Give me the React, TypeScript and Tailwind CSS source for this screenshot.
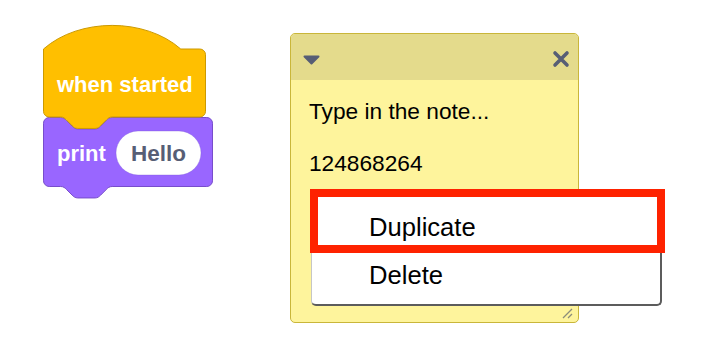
import React from "react";

const S = 1.43;
const R = 4 * S;

function notch(dir: 1 | -1) {
  const k = (n: number) => (n * S * dir).toFixed(2);
  const v = (n: number) => (n * S).toFixed(2);
  return `c ${k(2)},0 ${k(3)},${v(1)} ${k(4)},${v(2)} l ${k(4)},${v(4)} c ${k(1)},${v(1)} ${k(2)},${v(2)} ${k(4)},${v(2)} h ${k(12)} c ${k(2)},0 ${k(3)},${v(-1)} ${k(4)},${v(-2)} l ${k(4)},${v(-4)} c ${k(1)},${v(-1)} ${k(2)},${v(-2)} ${k(4)},${v(-2)}`;
}

function hatPath(x: number, top: number, right: number, bottom: number) {
  return [
    `M ${x},${top}`,
    `c ${25 * S},${-22 * S} ${71 * S},${-22 * S} ${96 * S},0`,
    `H ${right - R} a ${R},${R} 0 0 1 ${R},${R}`,
    `V ${bottom - R} a ${R},${R} 0 0 1 ${-R},${R}`,
    `H ${x + 48 * S} ${notch(-1)}`,
    `H ${x + R} a ${R},${R} 0 0 1 ${-R},${-R} Z`,
  ].join(" ");
}

function stackPath(x: number, top: number, right: number, bottom: number) {
  return [
    `M ${x},${top + R} a ${R},${R} 0 0 1 ${R},${-R}`,
    `H ${x + 12 * S} ${notch(1)}`,
    `H ${right - R} a ${R},${R} 0 0 1 ${R},${R}`,
    `V ${bottom - R} a ${R},${R} 0 0 1 ${-R},${R}`,
    `H ${x + 48 * S} ${notch(-1)}`,
    `H ${x + R} a ${R},${R} 0 0 1 ${-R},${-R} Z`,
  ].join(" ");
}

function Blocks() {
  const font = { fontFamily: '"Liberation Sans", Arial, sans-serif' };
  return (
    <svg className="absolute left-0 top-0" width="240" height="215">
      <path d={stackPath(43.5, 117.5, 212.5, 186.5)} fill="#9966ff" stroke="#774dcb" strokeWidth="1" />
      <path d={hatPath(43.5, 49, 205.5, 117)} fill="#ffbf00" stroke="#cc9900" strokeWidth="1" />
      <text x="57" y="92" fill="#ffffff" fontSize="22" fontWeight="700" style={font}>
        when started
      </text>
      <text x="57" y="161" fill="#ffffff" fontSize="22" fontWeight="700" style={font}>
        print
      </text>
      <rect x="116" y="131" width="85" height="44" rx="22" fill="#ffffff" stroke="#7c58d8" strokeOpacity="0.35" />
      <text x="158.5" y="161" fill="#575e75" fontSize="22.5" fontWeight="700" textAnchor="middle" style={font}>
        Hello
      </text>
    </svg>
  );
}

function Note() {
  return (
    <div className="absolute left-[290px] top-[33px] w-[289px] h-[290px] flex flex-col rounded-[5px] border border-[#c9b63a] bg-[#fef49c] overflow-hidden">
      <div className="h-[46px] bg-[#e4db8c] flex items-center justify-between pl-[12px] pr-[8px]">
        <svg width="17" height="10" viewBox="0 0 17 10" className="mt-[5px]">
          <path d="M1.5 1.5 H15.5 L8.5 8.5 Z" fill="#575e75" stroke="#575e75" strokeWidth="2" strokeLinejoin="round" />
        </svg>
        <svg width="18" height="18" viewBox="0 0 18 18" className="mt-[3px]">
          <path d="M3 3 L15 15 M15 3 L3 15" stroke="#575e75" strokeWidth="3.6" strokeLinecap="round" />
        </svg>
      </div>
      <div className="relative flex-1 pl-[18px] pt-[18px] text-[22.7px] leading-[26px] text-black font-['Liberation_Sans',Arial,sans-serif]">
        <div>Type in the note...</div>
        <div className="mt-[26px]">124868264</div>
        <svg width="12" height="12" viewBox="0 0 12 12" className="absolute right-[4px] bottom-[3px]">
          <path d="M1 11 L10 2 M6 11 L10 7" stroke="#8c8c7a" strokeWidth="1.3" />
        </svg>
      </div>
    </div>
  );
}

function ContextMenu() {
  return (
    <>
      <div className="absolute left-[311px] top-[196px] w-[351px] h-[110px] py-[7px] bg-white border-l border-l-[#c6c6c6] border-r-2 border-b-2 border-r-[#5c5c5c] border-b-[#5c5c5c] rounded-b-[5px] text-[25.6px] text-black font-['Liberation_Sans',Arial,sans-serif]">
        <div className="h-[48px] leading-[48px] pl-[57px]">Duplicate</div>
        <div className="h-[48px] leading-[48px] pl-[57px]">Delete</div>
      </div>
      <div className="absolute left-[310px] top-[189px] w-[355px] h-[64px] border-[8px] border-[#fe2200]" />
    </>
  );
}

export default function App() {
  return (
    <div className="relative w-[728px] h-[358px] bg-white overflow-hidden">
      <Blocks />
      <Note />
      <ContextMenu />
    </div>
  );
}
